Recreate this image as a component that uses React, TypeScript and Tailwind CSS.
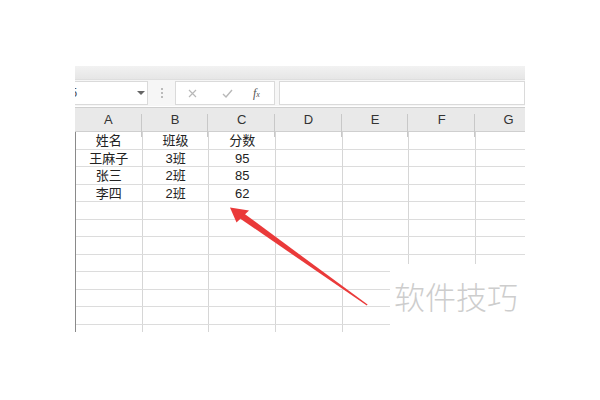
import React from "react";

const cols = ["A", "B", "C", "D", "E", "F", "G"];

const data: string[][] = [
  ["姓名", "班级", "分数"],
  ["王麻子", "3班", "95"],
  ["张三", "2班", "85"],
  ["李四", "2班", "62"],
];

const font = { fontFamily: '"Liberation Sans", "Noto Sans CJK SC", sans-serif' };

function Toolbar() {
  return (
    <div className="flex h-[26px] shrink-0 items-center bg-[#f6f6f6]">
      <div className="relative flex h-[24px] w-[73px] items-center overflow-hidden border-y border-r border-[#dadada] bg-white">
        <span className="-ml-[5px] text-[13px] text-[#555]">5</span>
        <span className="absolute left-[62px] top-[9px] h-0 w-0 border-x-[4px] border-t-[4px] border-x-transparent border-t-[#666]" />
      </div>
      <div className="ml-[13px] flex flex-col gap-[2px]">
        <span className="h-[2px] w-[2px] bg-[#bbb]" />
        <span className="h-[2px] w-[2px] bg-[#bbb]" />
        <span className="h-[2px] w-[2px] bg-[#bbb]" />
      </div>
      <div className="ml-[12px] flex h-[24px] w-[100px] items-center border border-[#dadada] bg-white text-[#bbb]">
        <svg className="ml-[12px]" width="9" height="9" viewBox="0 0 9 9">
          <path d="M1 1L8 8M8 1L1 8" stroke="#b8b8b8" strokeWidth="1.2" />
        </svg>
        <svg className="ml-[25px]" width="11" height="9" viewBox="0 0 11 9">
          <path d="M1 5L4 8L10 1" stroke="#b8b8b8" strokeWidth="1.4" fill="none" />
        </svg>
        <span
          className="ml-[20px] text-[12px] italic text-[#555]"
          style={{ fontFamily: '"Liberation Serif", serif' }}
        >
          f<span className="text-[8px]">x</span>
        </span>
      </div>
      <div className="ml-[4px] h-[24px] flex-1 border border-[#dadada] bg-white" />
    </div>
  );
}

export default function App() {
  return (
    <div className="relative h-[400px] w-[600px] overflow-hidden bg-white" style={font}>
      <div className="ml-[75px] mt-[66px] flex h-[266px] w-[450px] flex-col overflow-hidden">
        <div className="h-[14px] shrink-0 border-b border-[#dedede] bg-gradient-to-b from-[#f2f2f2] to-[#e6e6e6]" />
        <Toolbar />
        <div className="mt-[1px] grid h-[25px] shrink-0 grid-cols-[repeat(7,66.7px)] border-y border-[#cfcfcf] bg-[#e9e9e9] text-[13px] text-[#333]">
          {cols.map((c) => (
            <div key={c} className="relative flex items-end justify-center pb-[2px]">
              <span className="absolute right-0 top-[6px] h-full w-px bg-[#c8c8c8]" />
              {c}
            </div>
          ))}
        </div>
        <div className="shrink-0 border-l border-[#8a8a8a]">
          {Array.from({ length: 12 }).map((_, r) => (
            <div key={r} className="grid h-[17.5px] grid-cols-[repeat(7,66.7px)] border-b border-[#dcdcdc] text-[13px] leading-[17px] text-[#222]">
              {cols.map((c, i) => (
                <div key={c} className="border-r border-[#d6d6d6] text-center">
                  {data[r]?.[i] ?? ""}
                </div>
              ))}
            </div>
          ))}
        </div>
      </div>

      {/* watermark */}
      <div className="absolute left-[390px] top-[264px] h-[80px] w-[210px] bg-white">
        <span className="ml-[4px] mt-[14px] block text-[31px] leading-[36px] text-[#cdcdcd]" style={{ fontFamily: '"Noto Sans CJK SC", sans-serif', fontWeight: 300 }}>
          软件技巧
        </span>
      </div>

      {/* arrow */}
      <svg className="absolute left-0 top-0" width="600" height="400" viewBox="0 0 600 400">
        <polygon points="230,207.5 249,210.5 236.5,222.5" fill="#ea3a3a" />
        <polygon points="240,218.5 244,213.5 367.6,304.6 366.8,305.6" fill="#ea3a3a" />
      </svg>
    </div>
  );
}
